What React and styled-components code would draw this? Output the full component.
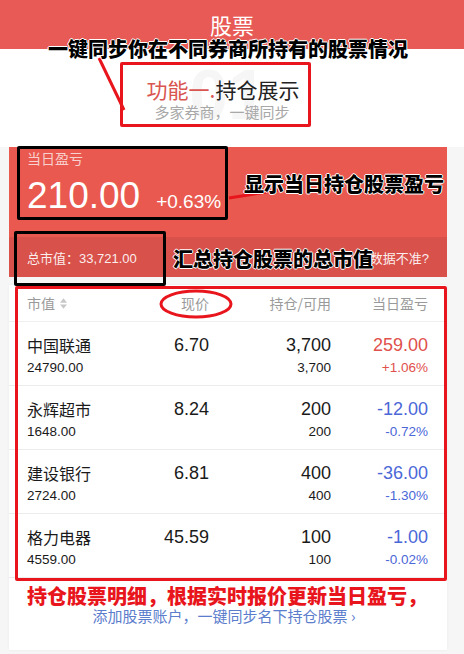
import React from "react";
import styled, { createGlobalStyle } from "styled-components";

const GlobalStyle = createGlobalStyle`
  body {
    margin: 0;
    background: #f6f6f6;
    font-family: "Liberation Sans", "Noto Sans CJK SC", sans-serif;
  }
`;

const stocks = [
  { name: "中国联通", value: "24790.00", price: "6.70", hold: "3,700", avail: "3,700", pnl: "259.00", pct: "+1.06%", up: true },
  { name: "永辉超市", value: "1648.00", price: "8.24", hold: "200", avail: "200", pnl: "-12.00", pct: "-0.72%" },
  { name: "建设银行", value: "2724.00", price: "6.81", hold: "400", avail: "400", pnl: "-36.00", pct: "-1.30%" },
  { name: "格力电器", value: "4559.00", price: "45.59", hold: "100", avail: "100", pnl: "-1.00", pct: "-0.02%" },
];

const App = () => {
  return (
    <Page>
      <GlobalStyle />
      <Header>股票</Header>

      <Intro>
        <Watermark>01</Watermark>
        <IntroTitle>
          <Accent>功能一.</Accent>持仓展示
        </IntroTitle>
        <IntroSub>多家券商，一键同步</IntroSub>
      </Intro>

      <Cards>
        <Summary>
          <SummaryTop>
            <SummaryLabel>当日盈亏</SummaryLabel>
            <SummaryLine>
              <BigNumber>210.00</BigNumber>
              <BigPercent>+0.63%</BigPercent>
            </SummaryLine>
          </SummaryTop>
          <SummaryStrip>
            <span>总市值：33,721.00</span>
            <span>数据不准?</span>
          </SummaryStrip>
        </Summary>

        <Table>
          <HeadRow>
            <HeadCell>
              市值
              <SortIcon viewBox="0 0 8 12">
                <path d="M4 0 L8 5 H0 Z M0 7 H8 L4 12 Z" fill="#c8c8c8" />
              </SortIcon>
            </HeadCell>
            <HeadCell $right>现价</HeadCell>
            <HeadCell $right>持仓/可用</HeadCell>
            <HeadCell $right>当日盈亏</HeadCell>
          </HeadRow>

          {stocks.map((s) => (
            <Row key={s.name}>
              <Cell>
                <Name>{s.name}</Name>
                <Sub>{s.value}</Sub>
              </Cell>
              <Cell $right>
                <Main>{s.price}</Main>
              </Cell>
              <Cell $right>
                <Main>{s.hold}</Main>
                <Sub>{s.avail}</Sub>
              </Cell>
              <Cell $right>
                <Main $tone={s.up ? "up" : "down"}>{s.pnl}</Main>
                <Sub $tone={s.up ? "up" : "down"}>{s.pct}</Sub>
              </Cell>
            </Row>
          ))}

          <Footer>
            <AddLink>添加股票账户，一键同步名下持仓股票 ›</AddLink>
          </Footer>
        </Table>
      </Cards>

      {/* annotations drawn over the screenshot */}
      <Marks viewBox="0 0 464 654">
        <line x1="99" y1="58" x2="124" y2="110" stroke="#e8151c" strokeWidth="3" />
        <line x1="229" y1="198" x2="279" y2="190" stroke="#e8151c" strokeWidth="3" />
        <ellipse cx="196" cy="304" rx="35" ry="13" fill="none" stroke="#e8151c" strokeWidth="3" />
      </Marks>
      <Frame $color="#e8151c" $top={62} $left={120} $w={191} $h={65} />
      <Frame $color="#000" $top={146} $left={17} $w={211} $h={74} />
      <Frame $color="#000" $top={231} $left={14} $w={152} $h={55} />
      <Frame $color="#e8151c" $top={286} $left={15} $w={432} $h={295} />

      <Note $top={37} $left={48}>一键同步你在不同券商所持有的股票情况</Note>
      <Note $top={172} $left={244}>显示当日持仓股票盈亏</Note>
      <Note $top={247} $left={173}>汇总持仓股票的总市值</Note>
      <Note $top={584} $left={27} $color="#e8151c">持仓股票明细，根据实时报价更新当日盈亏，</Note>
    </Page>
  );
};

export default App;

const Page = styled.div`
  position: relative;
  width: 464px;
  min-height: 654px;
  background: #f6f6f6;
  overflow: hidden;
`;

const Header = styled.div`
  height: 49px;
  background: #e85a55;
  color: #fff;
  font-family: "Noto Sans CJK SC", sans-serif;
  font-size: 22px;
  display: flex;
  align-items: center;
  justify-content: center;
  padding-bottom: 2px;
  box-sizing: border-box;
`;

const Intro = styled.div`
  position: relative;
  height: 98px;
  background: #fff;
  display: flex;
  flex-direction: column;
  align-items: center;
  padding-top: 27px;
  box-sizing: border-box;
`;

const Watermark = styled.div`
  position: absolute;
  top: 6px;
  left: 50%;
  transform: translateX(-55%);
  font-size: 70px;
  font-weight: bold;
  color: #f6f6f6;
  line-height: 80px;
`;

const IntroTitle = styled.div`
  position: relative;
  font-family: "Noto Sans CJK SC", sans-serif;
  font-size: 21px;
  line-height: 26px;
  color: #222;
  margin-left: -18px;
`;

const Accent = styled.span`
  color: #d95550;
`;

const IntroSub = styled.div`
  position: relative;
  font-family: "Noto Sans CJK SC", sans-serif;
  font-size: 15px;
  line-height: 20px;
  color: #a8a8a8;
  margin-left: -20px;
`;

const Cards = styled.div`
  padding: 0 17px 0 9px;
  display: flex;
  flex-direction: column;
  gap: 8px;
`;

const Summary = styled.div`
  background: #e9594f;
  color: #fff;
`;

const SummaryTop = styled.div`
  height: 90px;
  padding: 3px 18px 0;
  box-sizing: border-box;
`;

const SummaryLabel = styled.div`
  font-family: "Noto Sans CJK SC", sans-serif;
  font-size: 14px;
  line-height: 17px;
  color: rgba(255, 255, 255, 0.72);
`;

const SummaryLine = styled.div`
  display: flex;
  align-items: baseline;
  gap: 16px;
  margin-top: 7px;
`;

const BigNumber = styled.div`
  font-size: 37px;
  line-height: 44px;
`;

const BigPercent = styled.div`
  font-size: 19px;
`;

const SummaryStrip = styled.div`
  height: 40px;
  background: #d8524b;
  display: flex;
  align-items: center;
  justify-content: space-between;
  padding: 0 18px;
  font-size: 13px;
  color: rgba(255, 255, 255, 0.92);
`;

const Table = styled.div`
  background: #fff;
  box-shadow: 0 0 3px rgba(0, 0, 0, 0.05);
`;

const columns = `
  display: grid;
  grid-template-columns: 110px 72px 122px 97px;
  padding: 0 19px 0 18px;
`;

const HeadRow = styled.div`
  ${columns}
  height: 37px;
  align-items: center;
  border-bottom: 1px solid #efefef;
  box-sizing: border-box;
`;

const HeadCell = styled.div`
  display: flex;
  align-items: center;
  justify-content: ${(p) => (p.$right ? "flex-end" : "flex-start")};
  gap: 5px;
  font-family: "Noto Sans CJK SC", sans-serif;
  font-size: 14px;
  color: #9a9a9a;
`;

const SortIcon = styled.svg`
  width: 7px;
  height: 11px;
`;

const Row = styled.div`
  ${columns}
  height: 64px;
  padding-top: 13px;
  box-sizing: border-box;
  border-bottom: 1px solid #ececec;
`;

const Cell = styled.div`
  display: flex;
  flex-direction: column;
  align-items: ${(p) => (p.$right ? "flex-end" : "flex-start")};
  gap: 4px;
`;

const toneColor = (t) => (t === "up" ? "#e0504c" : t === "down" ? "#4b67d8" : "#1a1a1a");

const Name = styled.div`
  font-family: "Noto Sans CJK SC", sans-serif;
  font-size: 16px;
  line-height: 20px;
  color: #1a1a1a;
`;

const Main = styled.div`
  font-size: 18px;
  line-height: 20px;
  color: ${(p) => toneColor(p.$tone)};
`;

const Sub = styled.div`
  font-size: 13.5px;
  line-height: 18px;
  color: ${(p) => toneColor(p.$tone)};
`;

const Footer = styled.div`
  height: 72px;
  padding-top: 29px;
  box-sizing: border-box;
  display: flex;
  justify-content: center;
`;

const AddLink = styled.div`
  font-family: "Noto Sans CJK SC", sans-serif;
  font-size: 15px;
  line-height: 18px;
  color: #5b7dcc;
  margin-left: -8px;
`;

const Marks = styled.svg`
  position: absolute;
  left: 0;
  top: 0;
  width: 464px;
  height: 654px;
  pointer-events: none;
`;

const Frame = styled.div`
  position: absolute;
  top: ${(p) => p.$top}px;
  left: ${(p) => p.$left}px;
  width: ${(p) => p.$w}px;
  height: ${(p) => p.$h}px;
  border: 3px solid ${(p) => p.$color};
  border-radius: 2px;
  box-sizing: border-box;
  pointer-events: none;
`;

const Note = styled.div`
  position: absolute;
  top: ${(p) => p.$top}px;
  left: ${(p) => p.$left}px;
  font-family: "Noto Sans CJK SC", sans-serif;
  font-weight: 900;
  font-size: 20px;
  line-height: 24px;
  white-space: nowrap;
  color: ${(p) => p.$color || "#000"};
  text-shadow: 1px 0 0 #fff, -1px 0 0 #fff, 0 1px 0 #fff, 0 -1px 0 #fff;
`;
